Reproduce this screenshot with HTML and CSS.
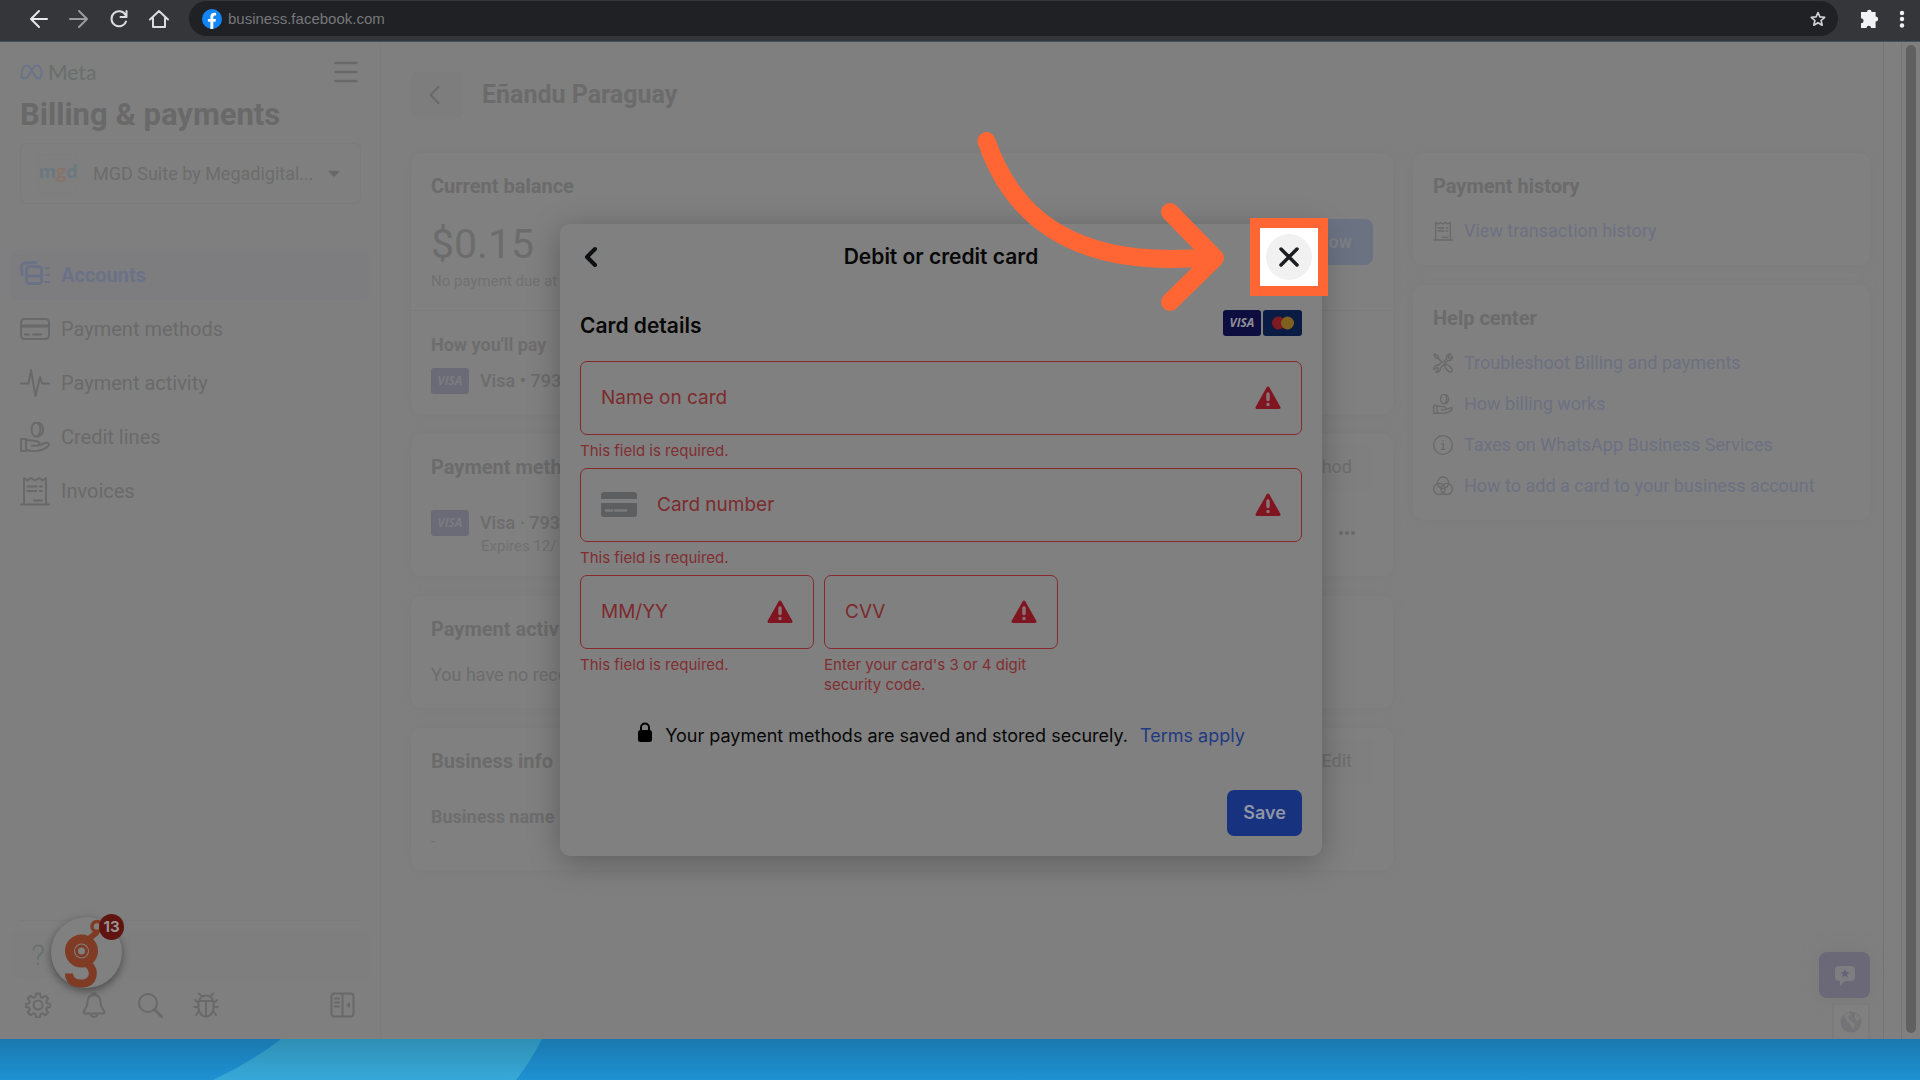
FILE: index.html
```html
<!DOCTYPE html>
<html lang="en">
<head>
<meta charset="utf-8">
<title>Billing &amp; payments</title>
<link rel="stylesheet" href="styles.css">
</head>
<body>
<svg class="defs" width="0" height="0" aria-hidden="true">
  <symbol id="i-invoice" viewBox="0 0 30 30"><path d="M4 28V2l3.500 2.500L11 2l4 2.500L19 2l3.500 2.500L26 2v26M1 28.500h28M7.500 10.500h9M20 10.500h2M7.500 15h9M20 15h2M14 24.500h8"/></symbol>
  <symbol id="i-credit" viewBox="0 0 30 30"><ellipse cx="16" cy="7.500" rx="4.500" ry="7"/><path d="M17 .6c7.500-.5 9 13 0 14M1 17h5v12H1zM6 18.500c4-1.200 6 .5 8.500.5 5.500-.5 6 4.500 2 4.800H12M18.500 23c3-.3 5.500-2 8-2.300 3-.2 3 2 1 3.800-5 4.800-15 6-21.500 3"/></symbol>
  <symbol id="i-alert" viewBox="0 0 26 24"><path d="M13 2 24 21.500H2z" fill="#801522" stroke="#801522" stroke-width="3" stroke-linejoin="round"/><path d="M13 8v5.500M13 18.500v.1" stroke="#8b7376" stroke-width="3.500" stroke-linecap="round"/></symbol>
</svg>

<header class="chrome">
  <nav class="chrome-nav" aria-label="Browser">
    <button aria-label="Back"><svg width="20" height="20" viewBox="0 0 20 20"><path d="M18 10H3M10 2l-8 8 8 8" stroke="#e8e9ea"/></svg></button>
    <button aria-label="Forward"><svg width="20" height="20" viewBox="0 0 20 20"><path d="M1 10h15M10 2l8 8-8 8" stroke="#9b9c9e"/></svg></button>
    <button aria-label="Reload"><svg width="20" height="20" viewBox="0 0 20 20"><path d="M16.500 6A7.500 7.500 0 1 0 17 12.500M17.500 2v6h-6" stroke="#dcddde"/></svg></button>
    <button aria-label="Home"><svg width="20" height="20" viewBox="0 0 20 20"><path d="M1 10.500 10 2l9 8.500M4 9v9h12V9" stroke="#dcddde"/></svg></button>
  </nav>
  <div class="url">
    <svg width="20" height="20" viewBox="0 0 20 20"><circle cx="10" cy="10" r="10" fill="#1286f5"/><path d="M8.400 20v-7.200H5.900V10h2.500V7.800c0-2.600 1.500-4 3.800-4 .9 0 1.700.1 1.900.2v2.500h-1.300c-1.100 0-1.500.6-1.500 1.500v2h2.700l-.5 2.800h-2.200V20z" fill="#fff"/></svg>
    <input class="url-text" aria-label="Address" value="business.facebook.com">
    <button aria-label="Bookmark"><svg width="16" height="16" viewBox="0 0 16 16"><path d="m8 1.500 1.900 4.400 4.800.4-3.600 3.200 1.100 4.700L8 11.700l-4.200 2.500 1.100-4.700L1.300 6.300l4.800-.4z" stroke="#d5d6d8" stroke-width="1.600"/></svg></button>
  </div>
  <button aria-label="Extensions"><svg width="20" height="20" viewBox="0 0 20 20"><path d="M7 3a2.300 2.300 0 0 1 4.600 0h4v4.600a2.500 2.500 0 0 1 0 5V19h-4.500a2.300 2.300 0 0 0-4.600 0H1v-4.700a2.500 2.500 0 0 0 0-5V3z" fill="#f1f2f3"/></svg></button>
  <button aria-label="Menu"><svg width="6" height="18" viewBox="0 0 6 18"><g fill="#f1f2f3"><circle cx="3" cy="3" r="2.200"/><circle cx="3" cy="9" r="2.200"/><circle cx="3" cy="15.500" r="2.200"/></g></svg></button>
</header>

<div class="app">
  <aside class="sidebar">
    <div class="brand">
      <svg width="23" height="16" viewBox="0 0 23 16"><path d="M1.500 12C1 6 4 1.500 7 1.500c4.500 0 7 13 11.500 13 5 0 3.500-13-2-13C12 1.500 9.500 14.500 5 14.500c-2 0-3.300-1-3.500-2.500z" fill="none" stroke="#6c7489" stroke-width="2.200"/></svg>
      <span class="brand-name">Meta</span>
      <button class="burger" aria-label="Open menu"><svg width="24" height="22" viewBox="0 0 24 22"><path d="M1.500 2h21M1.500 11h21M1.500 20h21" stroke-width="2.500"/></svg></button>
    </div>
    <h1>Billing &amp; payments</h1>
    <button class="account">
      <span class="account-logo"><span><span class="b">m</span><span class="o">g</span><span class="b">d</span></span></span>
      <span class="account-name">MGD Suite by Megadigital...</span>
      <svg width="12" height="8" viewBox="0 0 12 8"><path d="M1.500 1.500h9L6 6z" fill="#696969" stroke="#696969" stroke-width="1.500" stroke-linejoin="round"/></svg>
    </button>
    <nav class="menu">
      <a href="#" class="active"><svg viewBox="0 0 30 30" width="30" height="30"><path d="M6.500 9.500a3 3 0 0 1 3-3h9a3 3 0 0 1 3 3v11a3 3 0 0 1-3 3h-9a3 3 0 0 1-3-3zM7 16h14" stroke-width="3"/><path d="M2 15 1.500 6.500c0-2 1-3 3-3.500L16 2.500" stroke-width="3"/><path d="M25.500 8H29M25.500 15H29M25.500 22H29"/></svg>Accounts</a>
      <a href="#"><svg viewBox="0 0 30 30" width="30" height="30"><rect x="1" y="5" width="28" height="20" rx="3.500"/><path d="M1 12h28" stroke-width="3"/><path d="M5 20.500h4M13 20.500h8"/></svg>Payment methods</a>
      <a href="#"><svg viewBox="0 0 30 30" width="30" height="30"><path d="M1 15.500h7.500L11 2l4.500 26L20 9l2 6.500h7"/></svg>Payment activity</a>
      <a href="#"><svg width="30" height="30"><use href="#i-credit"/></svg>Credit lines</a>
      <a href="#"><svg width="30" height="30"><use href="#i-invoice"/></svg>Invoices</a>
    </nav>
    <div class="side-foot">
      <button class="help" aria-label="Help"><svg width="12" height="22" viewBox="0 0 12 22"><path d="M1.500 6C1.500 0 11 0 11 6c0 4-5 3.500-5 9M6 19.500v.5" stroke="#69716f"/></svg></button>
      <div class="tools">
        <button aria-label="Settings"><svg width="26" height="26" viewBox="0 0 26 26"><circle cx="13" cy="13" r="4.500"/><path d="M11 1.500h4l.5 3.300 2.200.9 2.700-2 2.800 2.800-2 2.700.9 2.200 3.400.5v3l-3.400.6-.9 2.200 2 2.700-2.800 2.800-2.700-2-2.200.9-.5 3.400h-4l-.5-3.400-2.200-.9-2.700 2-2.800-2.800 2-2.700-.9-2.200-3.400-.6v-3l3.400-.5.9-2.200-2-2.700 2.800-2.800 2.700 2 2.200-.9z"/></svg></button>
        <button aria-label="Notifications"><svg width="26" height="26" viewBox="0 0 26 26"><path d="M13 3C8 3 6.500 6.500 6.500 10.500 6.500 16 2.500 18 2.500 20.500q0 1 1.500 1h18q1.500 0 1.500-1c0-2.500-4-4.500-4-10C19.500 6.500 18 3 13 3zM11 3c0-2.500 4-2.500 4 0M10 22c0 4 6 4 6 0"/></svg></button>
        <button aria-label="Search"><svg width="26" height="26" viewBox="0 0 26 26"><circle cx="11" cy="11" r="9"/><path d="m17.500 17.500 7 7" stroke-width="3"/></svg></button>
        <button aria-label="Report a bug"><svg width="26" height="26" viewBox="0 0 26 26"><path d="M6 9h14c2 8-1 15.500-7 15.500S4 17 6 9c1-7 13-7 14 0M13 9v15M9 4 5.500 1.500M17 4l3.500-2.500M5.500 11 2 8M20.500 11 24 8M5 15H1M21 15h4M6 19l-3 4M20 19l3 4"/></svg></button>
        <button class="collapse" aria-label="Collapse sidebar"><svg width="26" height="26" viewBox="0 0 26 26"><rect x="1.500" y="1.500" width="22" height="23" rx="3"/><path d="M12.500 2v22M5 6.500h4M5 10.500h4M5 14.500h4"/><path d="m20 10-4 3 4 3z" fill="#696969" stroke-width="1"/></svg></button>
      </div>
      <button class="fab" aria-label="Assistant"><svg width="72" height="72" viewBox="0 0 72 72"><g fill="none" stroke="#7f3b23"><circle cx="30.500" cy="34" r="12" stroke-width="9"/><circle cx="30.500" cy="34" r="5" stroke-width="3"/><path d="M37 47c8 7 6 19.500-6.500 19.500-9 0-12.500-4-12.500-10" stroke-width="8" stroke-linecap="butt"/><path d="m39 21 6-5" stroke-width="6"/><circle cx="46" cy="9.500" r="5" stroke-width="3.500"/></g></svg><span class="count">13</span></button>
    </div>
  </aside>

  <main class="content">
    <div class="page-head">
      <button class="back" aria-label="Back"><svg width="12" height="20" viewBox="0 0 12 20"><path d="m10.500 2-8 8 8 8"/></svg></button>
      <h2>Eñandu Paraguay</h2>
    </div>
    <div class="columns">
      <div class="col">
        <section class="card balance">
          <div class="balance-top">
            <div><h3>Current balance</h3><p class="amount">$0.15</p><p class="small">No payment due at</p></div>
            <button class="pay">Pay now</button>
          </div>
          <div class="balance-how"><h4>How you'll pay</h4><div class="row"><span class="visa faded">VISA</span><b>Visa • 793</b></div></div>
        </section>
        <section class="card methods">
          <div class="head"><h3>Payment meth</h3><button class="ghost">Add payment method</button></div>
          <div class="row"><span class="visa faded">VISA</span><b>Visa · 793</b><button class="dots" aria-label="More"><svg width="18" height="6" viewBox="0 0 18 6"><g fill="#696969"><circle cx="3" cy="3" r="2"/><circle cx="9" cy="3" r="2"/><circle cx="15" cy="3" r="2"/></g></svg></button></div>
          <p class="small expires">Expires 12/</p>
        </section>
        <section class="card activity"><h3>Payment activ</h3><p>You have no rece</p></section>
        <section class="card business">
          <div class="head"><h3>Business info</h3><button class="ghost">Edit</button></div>
          <h4>Business name</h4><p class="small">-</p>
        </section>
      </div>
      <div class="col">
        <section class="card links">
          <h3>Payment history</h3>
          <a href="#"><svg width="20" height="20"><use href="#i-invoice"/></svg>View transaction history</a>
        </section>
        <section class="card links">
          <h3>Help center</h3>
          <a href="#"><svg width="20" height="20" viewBox="0 0 30 30"><path d="M2 1.500 7 4l1.500 4L14 14M1.500 2 4 7l4 1.500 5.500 5M16 13l4.500-4.500c-1-4 2-7.500 6-7L23 5l.5 2.500L26 8l3-3.500c1.500 4-2.500 7.500-6.500 6.500L11 22.500c.5 4-2.500 7-6.500 6.500L8 25l-.5-2.500L5 22l-3.500 3c-1-4 2.500-7 6.500-6.500l4-4M17.500 19l2-2c4 0 9 6 9.500 8.500-1 3-3 3.500-4.500 3L18 22z"/></svg>Troubleshoot Billing and payments</a>
          <a href="#"><svg width="20" height="20"><use href="#i-credit"/></svg>How billing works</a>
          <a href="#"><svg width="20" height="20" viewBox="0 0 30 30"><circle cx="15" cy="15" r="14"/><path d="M13 13h2.500v8M12.500 21.500h5M15 8.500v1"/></svg>Taxes on WhatsApp Business Services</a>
          <a href="#"><svg width="20" height="20" viewBox="0 0 30 30"><circle cx="15" cy="10" r="8.500"/><circle cx="9.500" cy="19.500" r="8.500"/><circle cx="20.500" cy="19.500" r="8.500"/></svg>How to add a card to your business account</a>
        </section>
      </div>
    </div>
    <div class="float">
      <button class="chat" aria-label="Feedback"><svg width="20" height="21" viewBox="0 0 20 21"><path d="M4 1h12q4 0 4 4v7q0 4-4 4h-6l-5 5v-5q-5 0-5-4V5q0-4 4-4z" fill="#7d7d82"/><path d="m10 4 1.300 3 3.200.2-2.500 2 .9 3.200-2.900-1.700-2.900 1.700.9-3.200-2.500-2 3.200-.2z" fill="#65627a"/></svg></button>
      <button class="globe" aria-label="Language"><svg width="22" height="22" viewBox="0 0 22 22"><circle cx="11" cy="11" r="10.500" fill="#737378"/><path d="M4 3.500 9 1l2 3-3 2 2 3 5 4-2 6-3-6-4-4zM15 2l5 4-2 5-3-4z" fill="#7f7f7f"/></svg></button>
    </div>
  </main>
  <div class="gutter"></div>
  <div class="track"><div class="thumb"></div></div>
</div>

<footer class="wallpaper">
  <svg width="560" height="41" viewBox="0 0 560 41"><defs><linearGradient id="g" x2="0" y2="1"><stop stop-color="#2e8fb4"/><stop offset="1" stop-color="#37a9d9"/></linearGradient></defs><path d="M281 0H542Q530 23 516 41H213Q250 24 281 0z" fill="url(#g)"/></svg>
</footer>

<div class="overlay">
  <form class="modal" aria-label="Debit or credit card">
    <header class="modal-head">
      <button type="button" class="modal-back" aria-label="Back"><svg width="14" height="22" viewBox="0 0 14 22"><path d="m11 3-8 8 8 8" stroke="#0e0f10" stroke-width="4"/></svg></button>
      <h2>Debit or credit card</h2>
    </header>
    <div class="details"><h3>Card details</h3><span class="visa">VISA</span><span class="mc"><svg width="24" height="14" viewBox="0 0 24 14"><circle cx="7.500" cy="7" r="6.500" fill="#7d1a22"/><circle cx="16.500" cy="7" r="6.500" fill="#80601f"/></svg></span></div>
    <div class="field"><div class="box"><input aria-label="Name on card" placeholder="Name on card"><svg width="26" height="24"><use href="#i-alert"/></svg></div><p>This field is required.</p></div>
    <div class="field"><div class="box"><svg class="cc" width="36" height="26" viewBox="0 0 36 26"><path d="M0 7V3q0-3 3-3h30q3 0 3 3v4zM0 11h36v11q0 3-3 3H3q-3 0-3-3z" fill="#5d5e60"/><path d="M5 18.500h6M14 18.500h11" stroke="#7b7b7c" stroke-width="2.500"/></svg><input aria-label="Card number" placeholder="Card number"><svg width="26" height="24"><use href="#i-alert"/></svg></div><p>This field is required.</p></div>
    <div class="pair">
      <div class="field"><div class="box"><input aria-label="MM/YY" placeholder="MM/YY"><svg width="26" height="24"><use href="#i-alert"/></svg></div><p>This field is required.</p></div>
      <div class="field"><div class="box"><input aria-label="CVV" placeholder="CVV"><svg width="26" height="24"><use href="#i-alert"/></svg></div><p>Enter your card's 3 or 4 digit security code.</p></div>
    </div>
    <div class="secure"><svg width="16" height="20" viewBox="0 0 16 20"><path d="M4 9V5.500a4 4 0 0 1 8 0V9" fill="none" stroke="#000" stroke-width="2"/><rect x="1" y="8" width="14" height="12" rx="2.500" fill="#000"/></svg><span>Your payment methods are saved and stored securely.</span><a href="#">Terms apply</a></div>
    <div class="actions"><button type="button" class="save">Save</button></div>
    <button type="button" class="close" aria-label="Close"><span><svg width="20" height="20" viewBox="0 0 20 20"><path d="m2 2 16 16M18 2 2 18" stroke="#1c1e21" stroke-width="3.500"/></svg></span></button>
    <svg class="arrow" width="260" height="190" viewBox="970 130 260 190" aria-hidden="true"><path d="M986.500 141C1013 218 1075 270 1210 257M1170 212l45 46-45 44" stroke="#ff6633" stroke-width="18"/></svg>
  </form>
</div>
</body>
</html>
```
FILE: styles.css
```css
* { box-sizing: border-box; margin: 0; }
body {
  position: relative;
  display: flex;
  flex-direction: column;
  min-height: 100vh;
  overflow: hidden;
  background: #7f7f7f;
  color: #6c6c6c;
  font: 18px/24px Roboto, sans-serif;
}
.defs { position: absolute; }
svg { display: block; flex: none; fill: none; stroke: #696969; stroke-width: 2; stroke-linecap: round; stroke-linejoin: round; }
svg [fill]:not([stroke]) { stroke: none; }
button { display: flex; align-items: center; justify-content: center; padding: 0; border: 0; background: none; color: inherit; font: inherit; }
a { text-decoration: none; }
input { min-width: 0; border: 0; padding: 0; background: none; outline: 0; }

/* browser bar */
.chrome { display: flex; align-items: center; height: 42px; padding: 0 15px 4px 0; background: #35363a; border-bottom: 1px solid #46535b; }
.chrome-nav { display: flex; gap: 20px; padding: 0 20px 0 29px; }
.url { flex: 1; display: flex; align-items: center; gap: 6px; height: 35px; margin-right: 22px; padding: 0 12px 0 13px; border-radius: 18px; background: #202124; }
.url-text { flex: 1; color: #77787b; font: 15px/20px "Liberation Sans", sans-serif; }
.chrome > button + button { margin-left: 19px; }

.app { flex: 1; display: flex; }

/* sidebar */
.sidebar { display: flex; flex-direction: column; width: 381px; padding: 18px 10px 18px; border-right: 1px solid #7b7b7b; }
.brand { display: flex; align-items: center; gap: 5px; padding: 0 12px 0 10px; height: 24px; }
.brand-name { font: 500 21px/24px Lato, sans-serif; color: #6a6f6e; }
.burger { margin-left: auto; }
h1 { padding: 13px 10px 9px; font-size: 31px; line-height: 36px; color: #696969; white-space: nowrap; }
.account { height: 61px; margin: 1px 9px 0 10px; padding: 0 20px 0 17px; border: 1px solid #7b7b7b; border-radius: 6px; justify-content: flex-start; }
.account-logo { width: 40px; height: 40px; border: 1px solid #7d7d7d; border-radius: 6px; font: 700 18px/32px "Open Sans", sans-serif; display: flex; justify-content: center; }
.account-name { flex: 1; margin-left: 15px; text-align: left; white-space: nowrap; }
.b { color: #6b7880; }
.o { color: #86736b; }
.menu { display: grid; gap: 3px; margin-top: 46px; }
.menu a { display: flex; align-items: center; gap: 11px; height: 51px; padding-left: 10px; border-radius: 8px; color: #6a6a6a; font-size: 20px; }
.menu .active { height: 50px; background: #7d7d80; color: #6b7186; font-weight: 700; }
.active svg { stroke: #6b7186; }
.side-foot { position: relative; margin-top: auto; padding-top: 10px; }
.side-foot::before { content: ""; display: block; height: 1px; margin: -10px 10px 10px; background: #7b7b7b; }
.help { width: 100%; height: 47px; padding-left: 22px; justify-content: flex-start; border-radius: 8px; background: #7e7e7e; }
.tools { display: flex; gap: 30px; padding: 14px 14px 3px 15px; }
.collapse { margin-left: auto; }
.fab { position: absolute; left: 41px; top: -3px; width: 71px; height: 71px; border-radius: 50%; background: #808080; box-shadow: 0 3px 8px #4a4a4a; }
.count { position: absolute; right: -2px; top: -3px; width: 25px; height: 26px; border-radius: 50%; background: #5f1410; color: #989393; font: 700 15px/26px Inter, sans-serif; }

/* page content */
.content { position: relative; flex: 1; min-width: 0; padding: 30px 13px 0 30px; background: #7f7f7f; }
.page-head { display: flex; align-items: center; gap: 20px; height: 46px; }
.back { width: 51px; height: 46px; padding-right: 5px; border-radius: 6px; background: #7d7d7d; }
.page-head h2 { font-size: 25px; line-height: 32px; color: #6b6b6b; }
.columns { display: grid; grid-template-columns: minmax(0, 1fr) 457px; gap: 20px; align-items: start; margin-top: 35px; }
.col { display: grid; gap: 20px; }
.card { border-radius: 10px; padding: 20px; background: #808080; box-shadow: 0 0 8px #7c7c7c; }
h3 { font-size: 20px; line-height: 26px; color: #6b6b6b; }
h4 { font-size: 18px; line-height: 24px; color: #6d6d6d; }
.small { font-size: 15px; line-height: 20px; color: #707070; }
.row { display: flex; align-items: center; gap: 11px; }
.row b { font-weight: 500; }
.visa { display: inline-block; width: 38px; height: 26px; border-radius: 3px; background: #0d0d3f; color: #8f8f99; font: italic 700 12px/26px "Open Sans", sans-serif; text-align: center; }
.visa.faded { background: #6b6b77; color: #7b7b80; }
.card.balance { padding: 0; }
.balance-top { display: flex; justify-content: space-between; align-items: flex-start; height: 158px; padding: 20px; border-bottom: 1px solid #7b7b7b; }
.amount { margin: 20px 0 2px; font-size: 41px; line-height: 50px; }
.pay { width: 110px; height: 46px; margin-top: 46px; padding-right: 21px; justify-content: flex-end; border-radius: 8px; background: #6b7282; color: #7c7e84; font-weight: 700; }
.balance-how { padding: 22px 20px 20px; }
.balance-how .row { margin-top: 11px; height: 26px; }
.head { display: flex; justify-content: space-between; align-items: center; }
.ghost { height: 46px; padding: 0 21px; border-radius: 8px; background: #7f7f7f; color: #6d6d6d; }
.methods { height: 142px; padding-top: 10px; }
.methods .row { margin-top: 20px; }
.dots { margin: 10px 17px -10px auto; }
.expires { margin: 0 0 0 50px; }
.activity { height: 112px; }
.activity p { margin-top: 21px; }
.business { height: 142px; padding-top: 10px; }
.business h4 { margin: 21px 0 2px; }
.links a { display: flex; align-items: center; gap: 11px; height: 25px; margin-top: 16px; color: #6c7081; }
.links h3 + a { margin-top: 19px; }
.links { padding-bottom: 22px; }
.float { position: absolute; right: 13px; bottom: 0; display: grid; justify-items: end; gap: 5px; }
.chat { width: 51px; height: 46px; border-radius: 8px; background: #6b6977; box-shadow: 0 0 16px #7a7a7a; }
.globe { width: 38px; height: 36px; border: 2px solid #7b7b7b; border-bottom: 0; background: #808080; }
.gutter { width: 19px; border: solid #747474; border-width: 0 1px; }
.track { width: 18px; padding: 3px 4px 6px; display: flex; }
.thumb { flex: 1; border-radius: 5px; background: #606060; }
.wallpaper { height: 41px; background: linear-gradient(#1a78af, #1e92d3); }

/* card dialog */
.overlay { position: absolute; inset: 0 38px 0 0; display: flex; align-items: center; justify-content: center; }
.modal { position: relative; width: 762px; padding: 0 20px 20px; border-radius: 10px; background: #808080; box-shadow: 0 6px 32px rgb(0 0 0 / 28%); color: #080808; font-family: Inter, sans-serif; }
.modal-head { display: flex; align-items: center; height: 66px; padding-left: 4px; }
.modal-head h2 { flex: 1; padding-right: 18px; text-align: center; font-size: 21px; font-weight: 600; }
.details { display: flex; align-items: center; gap: 2px; height: 71px; padding-bottom: 5px; }
.details h3 { flex: 1; color: #080808; font-size: 21px; font-weight: 600; padding-top: 6px; }
.mc { width: 39px; height: 26px; display: grid; place-items: center; border-radius: 3px; background: #0a1c43; }
.field { min-height: 107px; }
.box { display: flex; align-items: center; height: 74px; padding: 0 20px; border: 1px solid #85292c; border-radius: 7px; }
.box input { flex: 1; color: #7c2b2d; font: 19px/26px Inter, sans-serif; }
.box input::placeholder { color: #7c2b2d; opacity: 1; }
.cc { margin-right: 20px; }
.field p { padding-top: 6px; color: #802e30; font-size: 15px; line-height: 20px; }
.pair { display: grid; grid-template-columns: 234px 234px; gap: 10px; }
.secure { display: flex; justify-content: center; gap: 12px; margin-top: 27px; font-size: 18px; line-height: 28px; }
.secure a { color: #1f3a80; }
.actions { display: flex; justify-content: flex-end; margin-top: 40px; }
.save { width: 75px; height: 46px; border-radius: 7px; background: #17327f; color: #8f95a5; font-size: 18px; font-weight: 600; }
.close { position: absolute; right: -6px; top: -6px; width: 78px; height: 78px; border: 10px solid #ff6633; background: #fff; }
.close span { display: grid; place-items: center; width: 46px; height: 46px; border-radius: 50%; background: #f1f1f1; }
.arrow { position: absolute; right: 92px; top: -94px; pointer-events: none; }
```
